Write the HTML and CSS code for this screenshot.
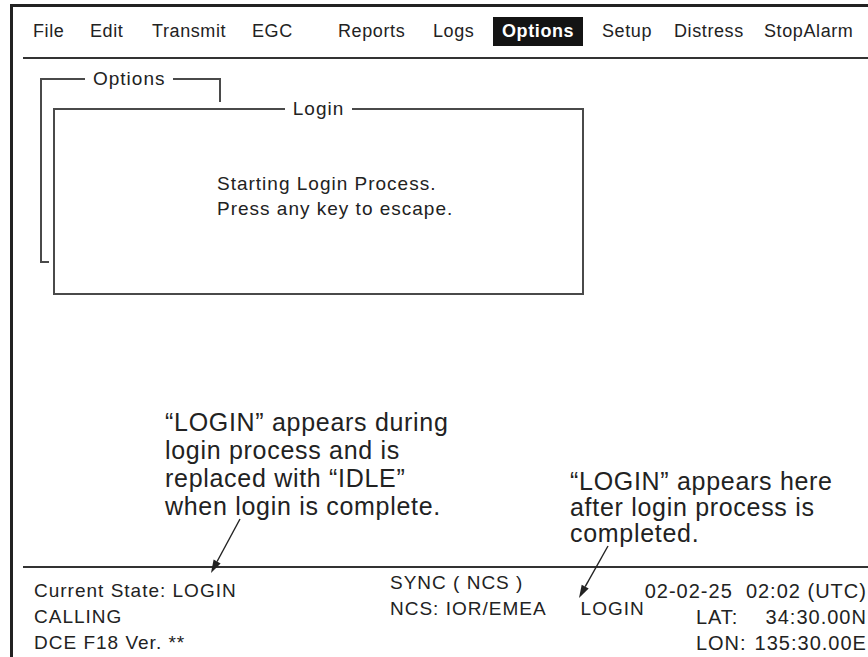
FILE: index.html
```html
<!DOCTYPE html>
<html lang="en">
<head>
<meta charset="utf-8">
<title>Options - Login</title>
<link rel="stylesheet" href="styles.css">
</head>
<body>
<div class="screen">
  <nav class="menubar">
    <span class="mi">File</span>
    <span class="mi">Edit</span>
    <span class="mi">Transmit</span>
    <span class="mi">EGC</span>
    <span class="mi">Reports</span>
    <span class="mi">Logs</span>
    <span class="mi active">Options</span>
    <span class="mi">Setup</span>
    <span class="mi">Distress</span>
    <span class="mi">StopAlarm</span>
  </nav>
  <main class="workspace">
    <div class="windows">
      <div class="win-options">
        <div class="opt-head"><div class="frame-title">Options</div></div>
        <div class="opt-body"><div class="hook"></div></div>
      </div>
      <div class="win-login">
        <div class="frame-title">Login</div>
        <p class="login-msg">Starting Login Process.<br>Press any key to escape.</p>
      </div>
    </div>
    <div class="notes">
      <p class="note note-left">“LOGIN” appears during<br>login process and is<br>replaced with “IDLE”<br>when login is complete.</p>
      <p class="note note-right">“LOGIN” appears here<br>after login process is<br>completed.</p>
    </div>
  </main>
  <footer class="status">
    <div class="st-col1">
      <div>Current State: LOGIN</div>
      <div>CALLING</div>
      <div>DCE F18 Ver. **</div>
    </div>
    <div class="st-col2">
      <div>SYNC ( NCS )</div>
      <div class="st-row"><span>NCS: IOR/EMEA</span><span>LOGIN</span></div>
    </div>
    <div class="st-col3">
      <div class="st-date">02-02-25&nbsp; 02:02 (UTC)</div>
      <div class="st-pos">
        <span>LAT:</span><span class="val">34:30.00N</span>
        <span>LON:</span><span class="val">135:30.00E</span>
      </div>
    </div>
  </footer>
</div>
<svg class="arrows" width="868" height="657" viewBox="0 0 868 657" aria-hidden="true">
  <line x1="240" y1="519" x2="217.1" y2="561.5" />
  <polygon points="211,573 220.6,563.4 213.6,559.6" />
  <line x1="608" y1="546" x2="585.2" y2="586.6" />
  <polygon points="579,598 588.7,588.5 581.7,584.7" />
</svg>
</body>
</html>
```

FILE: styles.css
```css
html, body {
  margin: 0;
  padding: 0;
  background: #ffffff;
}

body {
  position: relative;
  width: 868px;
  height: 657px;
  overflow: hidden;
  font-family: "Liberation Sans", Arial, Helvetica, sans-serif;
  color: #222222;
}

.screen {
  margin: 4px 0 0 10px;
  height: 653px;
  box-sizing: border-box;
  border-top: 3px solid #222222;
  border-left: 3px solid #222222;
  display: flex;
  flex-direction: column;
}

/* menu bar: fixed terminal-style columns */
.menubar {
  display: grid;
  grid-template-columns: 57px 62px 100px 86px 95px 69px 100px 72px 90px auto;
  justify-items: start;
  margin-left: 10px;
  padding: 10px 0 11px 1px;
  border-bottom: 2px solid #333333;
  font-size: 18px;
  letter-spacing: 0.6px;
}

.mi {
  padding: 0 9px;
  line-height: 29px;
  white-space: nowrap;
}

.mi.active {
  background: #141414;
  color: #ffffff;
  font-weight: bold;
}

/* work area */
.workspace {
  margin-left: 10px;
  height: 509px;
  box-sizing: border-box;
  border-bottom: 2px solid #333333;
}

.windows {
  display: grid;
  padding: 19px 0 0 17px;
}

.win-options,
.win-login {
  grid-row: 1;
  grid-column: 1;
  justify-self: start;
  align-self: start;
}

.win-options {
  width: 181px;
}

.frame-title {
  width: fit-content;
  background: #ffffff;
  padding: 0 8px;
  margin: -12px auto 0;
  font-size: 19px;
  line-height: 22px;
  letter-spacing: 1px;
}

.opt-head {
  height: 24px;
  box-sizing: border-box;
  border: 2px solid #4a4a4a;
  border-bottom: 0;
}

.opt-head .frame-title {
  margin-left: 43px;
}

.opt-body {
  height: 161px;
  box-sizing: border-box;
  border-left: 2px solid #4a4a4a;
  display: flex;
  align-items: flex-end;
}

.hook {
  width: 7px;
  border-bottom: 2px solid #4a4a4a;
}

.win-login {
  margin: 30px 0 0 13px;
  width: 531px;
  height: 187px;
  box-sizing: border-box;
  border: 2px solid #4a4a4a;
}

.login-msg {
  margin: 0;
  padding: 51px 0 0 162px;
  font-size: 19px;
  line-height: 25px;
  letter-spacing: 1px;
}

/* annotations */
.notes {
  display: flex;
  align-items: flex-start;
  margin-top: 113px;
}

.note {
  margin: 0;
  font-size: 25px;
  letter-spacing: 0.7px;
  white-space: nowrap;
}

.note-left {
  flex: 0 0 405px;
  margin-left: 142px;
  line-height: 28px;
}

.note-right {
  margin-top: 60px;
  line-height: 26px;
}

/* status area */
.status {
  display: flex;
  align-items: flex-start;
  padding: 10px 0 0 21px;
  font-size: 19px;
  line-height: 26px;
  letter-spacing: 1px;
  white-space: nowrap;
}

.st-col1 {
  flex: 0 0 356px;
}

.st-col2 {
  margin-top: -8px;
}

.st-row {
  display: flex;
  gap: 34px;
}

.st-col3 {
  margin-left: auto;
  margin-right: 4px;
  font-size: 20px;
}

.st-date {
  text-align: right;
}

.st-pos {
  display: grid;
  grid-template-columns: auto auto;
  justify-content: end;
  column-gap: 8px;
}

.st-pos .val {
  justify-self: end;
}

/* arrows overlay */
.arrows {
  position: absolute;
  top: 0;
  left: 0;
  pointer-events: none;
}

.arrows line {
  stroke: #222222;
  stroke-width: 1.4;
}

.arrows polygon {
  fill: #222222;
}
```
